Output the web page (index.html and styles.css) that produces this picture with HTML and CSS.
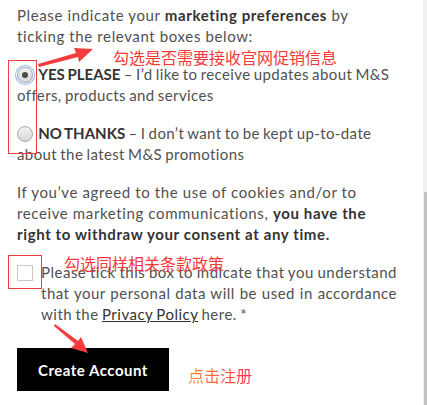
FILE: index.html
```html
<!DOCTYPE html>
<html lang="en">

<head>
  <meta charset="UTF-8">
  <meta name="viewport" content="width=device-width, initial-scale=1.0">
  <title>Marketing Preferences</title>
  <link rel="stylesheet" href="styles.css">
</head>

<body>

  <div class="container">
    <p class="intro">Please indicate your <strong>marketing preferences</strong> by ticking the relevant boxes below:</p>

    <div class="option">
      <span class="radio checked focused"><span class="dot"></span></span>
      <strong class="caps">YES PLEASE</strong> &ndash; I&rsquo;d like to receive updates about M&amp;S offers, products and services
    </div>

    <div class="option">
      <span class="radio"></span>
      <strong class="caps">NO THANKS</strong> &ndash; I don&rsquo;t want to be kept up-to-date about the latest M&amp;S promotions
    </div>

    <p class="consent">If you&rsquo;ve agreed to the use of cookies and/or to receive marketing communications, <strong>you have the right to withdraw your consent at any time.</strong></p>

    <div class="terms">
      <span class="checkbox"></span>
      <p>Please tick this box to indicate that you understand that your personal data will be used in accordance with the <a href="#">Privacy Policy</a> here. *</p>
    </div>

    <div class="actions">
      <button class="btn-create">Create Account</button>
    </div>
  </div>

  <!-- annotations drawn on top of the screenshot -->
  <div class="mark mark-radio"></div>
  <div class="mark mark-check"></div>

  <svg class="arrow arrow-one" width="60" height="24" viewBox="0 0 60 24">
    <polygon points="0,19 38,8 36,3 55,4 41,17 40,12 1,22" fill="#f43c3c" />
  </svg>
  <svg class="arrow arrow-two" width="40" height="34" viewBox="0 0 40 34">
    <polygon points="1,1 24,18 27,14 34,30 17,25 21,21 0,3" fill="#f43c3c" />
  </svg>

  <span class="note note-one">勾选是否需要接收官网促销信息</span>
  <span class="note note-two">勾选同样相关条款政策</span>
  <span class="note note-three">点击注册</span>

  <div class="scrollbar"><div class="thumb"></div></div>

</body>

</html>
```

FILE: styles.css
```css
body {
  font-family: Lato, "Liberation Sans", sans-serif;
  margin: 0;
  padding: 0;
  background-color: #fff;
  color: #505050;
  font-size: 15px;
  letter-spacing: 0.62px;
  line-height: 21px;
}

.container {
  padding: 5px 30px 0 17px;
}

p {
  margin: 0;
}

strong {
  color: #333;
  font-weight: bold;
}

.caps {
  letter-spacing: 0;
}

.intro {
  margin-bottom: 17px;
}

.option {
  margin-bottom: 17px;
  letter-spacing: 0.4px;
  word-spacing: -1px;
}

.consent {
  margin-bottom: 17px;
}

.radio {
  display: inline-block;
  box-sizing: border-box;
  width: 16px;
  height: 16px;
  border-radius: 50%;
  border: 1px solid #a9a9a9;
  background: linear-gradient(#f2f2f2, #d8d8d8);
  vertical-align: -3px;
  position: relative;
  margin-right: 2px;
}

.radio.focused {
  box-shadow: 0 0 0 1px #fff, 0 0 0 2px #8fb8f0;
}

.radio .dot {
  position: absolute;
  left: 4px;
  top: 4px;
  width: 6px;
  height: 6px;
  border-radius: 50%;
  background-color: #4a4a4a;
}

.terms {
  display: flex;
  gap: 8px;
  align-items: flex-start;
}

.terms p {
  text-align: justify;
  letter-spacing: 0.5px;
  word-spacing: -1px;
}

.checkbox {
  flex: none;
  box-sizing: border-box;
  width: 16px;
  height: 16px;
  margin-top: 3px;
  border: 1px solid #c8c8c8;
  background-color: #fff;
}

.terms a {
  color: #333;
  text-decoration: underline;
}

.actions {
  margin-top: 23px;
}

.btn-create {
  background-color: #000;
  color: #fff;
  border: none;
  width: 152px;
  height: 43px;
  font-family: Lato, "Liberation Sans", sans-serif;
  font-size: 15px;
  font-weight: bold;
  letter-spacing: 0.5px;
  padding: 0;
}

.mark {
  position: absolute;
  border: 1px solid #f03c3c;
}

.mark-radio {
  left: 8px;
  top: 60px;
  width: 27px;
  height: 92px;
}

.mark-check {
  left: 8px;
  top: 255px;
  width: 32px;
  height: 32px;
}

.arrow {
  position: absolute;
}

.arrow-one {
  left: 38px;
  top: 45px;
}

.arrow-two {
  left: 54px;
  top: 323px;
}

.note {
  position: absolute;
  font-family: "Noto Sans CJK SC", sans-serif;
  font-size: 16px;
  letter-spacing: 0;
  line-height: 20px;
  color: #f23a3a;
}

.note-one {
  left: 113px;
  top: 47px;
}

.note-two {
  left: 64px;
  top: 253px;
}

.note-three {
  left: 188px;
  top: 365px;
  background: linear-gradient(90deg, #ff8a2a, #ff2d55);
  -webkit-background-clip: text;
  background-clip: text;
  color: transparent;
}

.scrollbar {
  position: fixed;
  right: 0;
  top: 0;
  width: 4px;
  height: 100%;
  background-color: #f1f1f1;
}

.scrollbar .thumb {
  margin-top: 192px;
  margin-left: 1px;
  width: 3px;
  height: 213px;
  background-color: #c1c1c1;
}
```
